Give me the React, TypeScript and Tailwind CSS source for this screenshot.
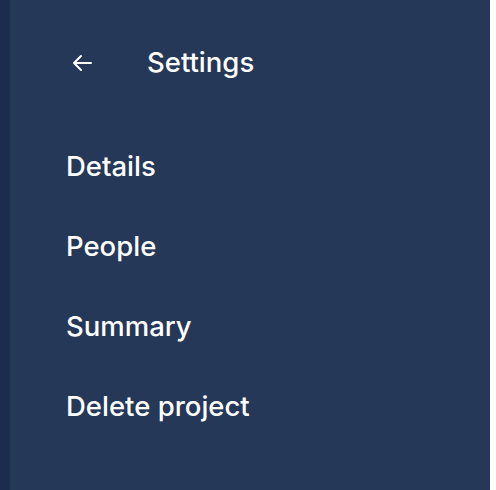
import React from "react";

export default function App() {
  return (
    <div className="w-[496px] h-[490px] flex bg-white" style={{ fontFamily: "Inter, 'Noto Sans', sans-serif" }}>
      <div className="w-[10px] h-full bg-[#1b2c4f]" />
      <div className="w-[480px] h-full bg-[#253858] text-white">
        <div className="flex items-center h-[40px] mt-[43px] pl-[62px]">
          <svg width="20" height="18" viewBox="0 0 20 18" fill="none" stroke="white" strokeWidth="2" strokeLinecap="round" strokeLinejoin="round">
            <path d="M19 9H2M9 2L2 9l7 7" />
          </svg>
          <span className="ml-[55px] text-[27.5px] font-medium leading-none">Settings</span>
        </div>
        <div className="flex flex-col pl-[56px] mt-[69px] gap-[52px] text-[27.5px] font-medium leading-[28px]">
          <span>Details</span>
          <span>People</span>
          <span>Summary</span>
          <span>Delete project</span>
        </div>
      </div>
    </div>
  );
}
